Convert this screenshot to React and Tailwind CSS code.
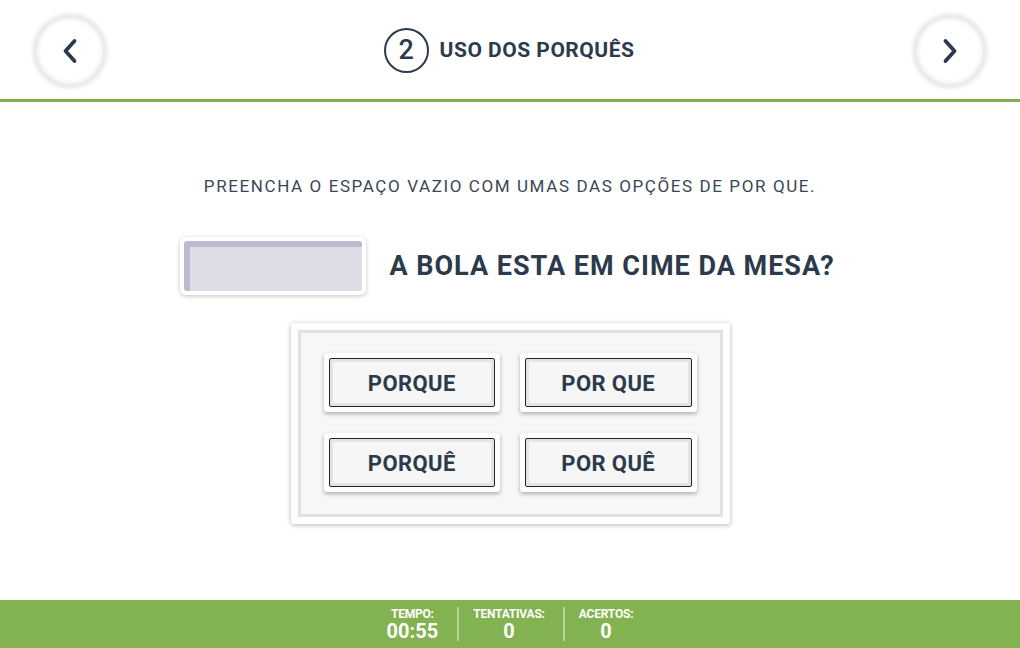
import React from 'react';

const opcoes = ['PORQUE', 'POR QUE', 'PORQUÊ', 'POR QUÊ'];

function NavButton({ dir }) {
  return (
    <button className="w-[70px] h-[70px] rounded-full bg-white flex items-center justify-center shadow-[0_0_5px_2px_rgba(0,0,0,0.11),inset_0_0_5px_2px_rgba(0,0,0,0.11)]">
      <svg width="22" height="28" viewBox="0 0 22 28" fill="none" stroke="#2c3a4b" strokeWidth="3.8" strokeLinecap="round" strokeLinejoin="round">
        {dir === 'left' ? <path d="M15.5 4 L6.5 14 L15.5 24" /> : <path d="M6.5 4 L15.5 14 L6.5 24" />}
      </svg>
    </button>
  );
}

function Stat({ label, value }) {
  return (
    <div className="flex flex-col items-center leading-none text-white">
      <span className="text-[12px] font-bold tracking-[-0.2px]">{label}</span>
      <span className="text-[20px] font-bold mt-[1px]">{value}</span>
    </div>
  );
}

export default function App() {
  return (
    <div className="w-[1020px] h-[648px] flex flex-col bg-white text-[#2c3a4b]" style={{ fontFamily: 'Roboto, "Liberation Sans", sans-serif' }}>
      <header className="h-[102px] shrink-0 border-b-[3px] border-[#7fb04b] flex items-center justify-between px-[35px] pt-[2px]">
        <NavButton dir="left" />
        <div className="flex items-center gap-[11px] pr-[2px]">
          <div className="w-[45px] h-[45px] rounded-full border-2 border-[#2c3a4b] flex items-center justify-center text-[27px] font-medium">2</div>
          <h1 className="text-[21px] font-bold tracking-[0.5px]">USO DOS PORQUÊS</h1>
        </div>
        <NavButton dir="right" />
      </header>

      <main className="flex-1 flex flex-col items-center pt-[72px]">
        <p className="text-[17px] leading-6 text-[#3a4656] tracking-[1.6px]">PREENCHA O ESPAÇO VAZIO COM UMAS DAS OPÇÕES DE POR QUE.</p>

        <div className="mt-[39px] flex items-center gap-[23px] pr-[5px]">
          <div className="w-[186px] h-[58px] rounded-md bg-white p-[4px] shadow-[0_1px_4px_rgba(0,0,0,0.25)]">
            <div className="w-full h-full rounded-[3px] bg-[#dedce6] border-t-[6px] border-l-[6px] border-[#bdb9d0]" />
          </div>
          <h2 className="text-[27px] font-bold tracking-[1px]">A BOLA ESTA EM CIME DA MESA?</h2>
        </div>

        <div className="mt-[28px] w-[439px] bg-white p-[7px] rounded-[2px] shadow-[0_1px_5px_rgba(0,0,0,0.3)]">
          <div className="border-[3px] border-[#e2e2e2] bg-[#f7f7f7] grid grid-cols-2 gap-x-[20px] gap-y-[21px] px-[23px] pt-[20px] pb-[22px]">
            {opcoes.map((o) => (
              <div key={o} className="h-[59px] bg-white rounded-[3px] p-[5px] shadow-[0_2px_4px_rgba(0,0,0,0.3)]">
                <div className="w-full h-full rounded-[2px] border border-[#2a2218] bg-[#f6f6f6] shadow-[inset_0_0_0_3px_#e4e4e4] flex items-center justify-center text-[22px] font-bold tracking-[0.4px] pt-[2px]">
                  {o}
                </div>
              </div>
            ))}
          </div>
        </div>
      </main>

      <footer className="h-[48px] shrink-0 bg-[#83b250] flex items-center justify-center">
        <Stat label="TEMPO:" value="00:55" />
        <div className="w-[2px] h-[34px] bg-[#b7d49a] ml-[19px] mr-[14px]" />
        <Stat label="TENTATIVAS:" value="0" />
        <div className="w-[2px] h-[34px] bg-[#b7d49a] ml-[18px] mr-[14px]" />
        <Stat label="ACERTOS:" value="0" />
      </footer>
    </div>
  );
}
